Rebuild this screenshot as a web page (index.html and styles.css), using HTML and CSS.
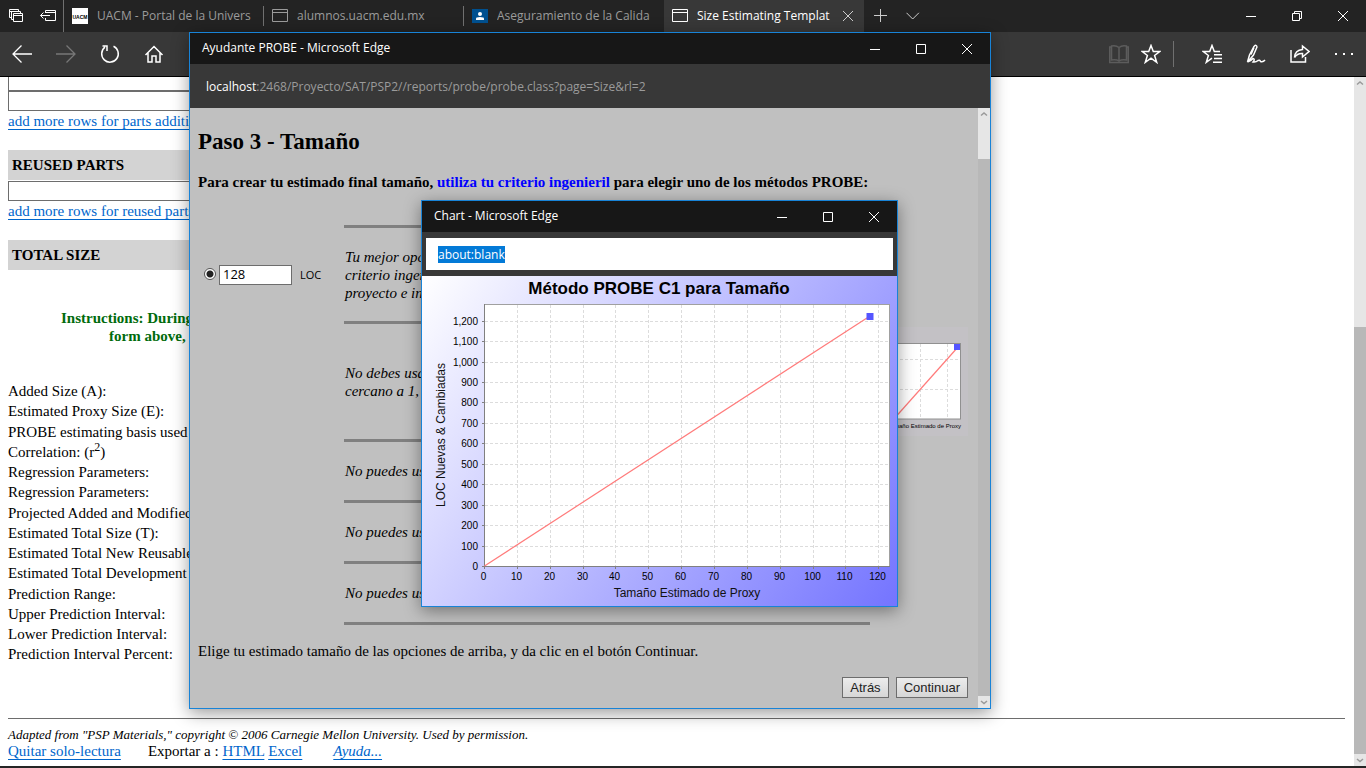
FILE: index.html
```html
<!DOCTYPE html>
<html lang="es">
<head>
<meta charset="utf-8">
<title>Size Estimating Template</title>
<link rel="stylesheet" href="styles.css">
</head>
<body>
<div class="browser">
  <header class="tabbar">
    <div class="tab-tools">
      <button class="icon-btn" aria-label="Pestañas reservadas"><svg width="16" height="16" viewBox="0 0 16 16"><path d="M3.5 9.500H1.500V1.500H10.500V3.500M1.500 3.500H10M5.500 13.500V5.500H14.500V13.500ZM5.500 7.500H14.500M3.500 11.500V3.500H12.500V5.500M3.500 11.500H5.500" /></svg></button>
      <button class="icon-btn" aria-label="Reservar pestañas"><svg width="16" height="16" viewBox="0 0 16 16"><path d="M5.500 5V2.500H15.500V12.500H5.500V10M5.500 4.500H15.500M.5 7.500H10M3.500 4.500L.5 7.500L3.500 10.500"/></svg></button>
    </div>
    <nav class="tabs">
      <a class="tab" href="#uacm"><svg width="16" height="16" viewBox="0 0 16 16"><rect width="16" height="16" class="fill-white"/><text x="8" y="11" class="fav-text">UACM</text></svg><span>UACM - Portal de la Univers</span></a>
      <a class="tab" href="#alumnos"><svg width="16" height="16" viewBox="0 0 16 16"><path d="M.5 1.500H15.500V13.500H.5ZM.5 4.500H15.500"/></svg><span>alumnos.uacm.edu.mx</span></a>
      <a class="tab no-rule" href="#calidad"><svg width="16" height="16" viewBox="0 0 16 16"><rect y="1" width="16" height="14" class="fill-blue"/><circle cx="8" cy="6" r="2" class="fill-white"/><path class="fill-white" d="M4 12V10.500Q4 9 8 9T12 10.500V12Z"/></svg><span>Aseguramiento de la Calida</span></a>
      <div class="tab active"><svg width="16" height="16" viewBox="0 0 16 16"><path d="M.5 1.500H15.500V13.500H.5ZM.5 4.500H15.500"/></svg><span>Size Estimating Templat</span><button class="icon-btn tab-close" aria-label="Cerrar pestaña"><svg width="12" height="12" viewBox="0 0 12 12"><path d="M1 1L11 11M11 1L1 11"/></svg></button></div>
    </nav>
    <button class="icon-btn add" aria-label="Nueva pestaña"><svg width="14" height="14" viewBox="0 0 14 14"><path d="M6.500 0V13M0 6.500H13"/></svg></button>
    <button class="icon-btn more" aria-label="Vistas previas"><svg width="14" height="8" viewBox="0 0 14 8"><path d="M.5 .8L6.700 7L12.900 .8"/></svg></button>
    <div class="caption">
      <button class="cap" aria-label="Minimizar"><svg width="10" height="10" viewBox="0 0 10 10"><path d="M0 5.500H10"/></svg></button>
      <button class="cap" aria-label="Restaurar"><svg width="10" height="10" viewBox="0 0 10 10"><path d="M.5 2.500H7.500V9.500H.5ZM2.500 2.500V.5H9.500V7.500H7.500"/></svg></button>
      <button class="cap" aria-label="Cerrar"><svg width="10" height="10" viewBox="0 0 10 10"><path d="M0 0L10 10M10 0L0 10"/></svg></button>
    </div>
  </header>

  <div class="toolbar">
    <div class="nav-tools">
      <button class="icon-btn" aria-label="Atrás"><svg width="20" height="20" viewBox="0 0 20 20"><path class="mid" d="M.8 10H20M9.500 1.500L1 10L9.500 18.500"/></svg></button>
      <button class="icon-btn dim" aria-label="Adelante"><svg width="20" height="20" viewBox="0 0 20 20"><path class="mid" d="M0 10H19.200M10.500 1.500L19 10L10.500 18.500"/></svg></button>
      <button class="icon-btn" aria-label="Actualizar"><svg width="20" height="20" viewBox="0 0 20 20"><path class="thick" d="M13.500 2.300A8.300 8.300 0 1 1 5 3.200M2.500 2H7V7"/></svg></button>
      <button class="icon-btn" aria-label="Inicio"><svg width="20" height="20" viewBox="0 0 20 20"><path class="thick" d="M1.500 11L10 2.500L18.500 11M4 9V18H8V12H12V18H16V9"/></svg></button>
    </div>
    <div class="page-tools">
      <button class="icon-btn faint" aria-label="Vista de lectura"><svg width="20" height="20" viewBox="0 0 20 20"><path class="thick" d="M10 3.500V16.500M10 3.500Q7 1 2.500 2V16Q7 15 10 17Q13 15 17.500 16V2Q13 1 10 3.500M2.500 3H.7V18.500H19.300V3H17.500"/></svg></button>
      <button class="icon-btn" aria-label="Favoritos"><svg width="20" height="20" viewBox="0 0 20 20"><path class="thick" d="M10 1.500L12.300 7.500H18.800L13.600 11.500L15.700 18.300L10 14.200L4.300 18.300L6.400 11.500L1.200 7.500H7.700Z"/></svg></button>
      <span class="rule"></span>
      <button class="icon-btn" aria-label="Centro"><svg width="20" height="20" viewBox="0 0 20 20"><path class="thick" d="M18 7.500H12.300L10 1.500L7.700 7.500H1.200L6.400 11.500L4.300 18.300L10 14.200M12 10.800H20M12 14.500H20M11 18.300H20"/></svg></button>
      <button class="icon-btn" aria-label="Notas web"><svg width="20" height="20" viewBox="0 0 20 20"><path class="thick" d="M1.500 18L3.500 11L8 2.500Q10.500 0 11 3L7.500 11L2.500 17M8 3.500L5 10.500M1.500 18Q5 17 7 14.500Q9.500 15 7 18Q10 18.500 12 16.500Q14 15.500 14.500 17.500Q17 18.500 19 16"/></svg></button>
      <button class="icon-btn" aria-label="Compartir"><svg width="20" height="20" viewBox="0 0 20 20"><path class="thick" d="M1 6V18H15.500V13M4.500 13.500Q5 6 12.500 5.500V2L19 7.500L12.500 13V9.500Q7.500 9 4.500 13.500"/></svg></button>
      <button class="icon-btn" aria-label="Más"><svg width="20" height="20" viewBox="0 0 20 20"><path class="fill-white" d="M1 9h2v2H1zM9 9h2v2H9zM17 9h2v2H17z"/></svg></button>
    </div>
  </div>

  <div class="viewport">
    <main class="sheet">
      <input class="row-input first" aria-label="Parte agregada 1">
      <input class="row-input" aria-label="Parte agregada 2">
      <a class="link add-rows" href="#parts">add more rows for parts additions</a>
      <h3 class="band">REUSED PARTS</h3>
      <input class="row-input" aria-label="Parte reutilizada">
      <a class="link add-rows" href="#reused">add more rows for reused parts</a>
      <h3 class="band">TOTAL SIZE</h3>
      <p class="notice"><span>Instructions: During</span><span class="indent">form above,</span></p>
      <ul class="fields">
        <li>Added Size (A):</li>
        <li>Estimated Proxy Size (E):</li>
        <li class="tall">PROBE estimating basis used</li>
        <li>Correlation: (r<sup>2</sup>)</li>
        <li>Regression Parameters:</li>
        <li>Regression Parameters:</li>
        <li class="tall">Projected Added and Modified</li>
        <li>Estimated Total Size (T):</li>
        <li>Estimated Total New Reusable</li>
        <li>Estimated Total Development</li>
        <li class="tall">Prediction Range:</li>
        <li>Upper Prediction Interval:</li>
        <li>Lower Prediction Interval:</li>
        <li>Prediction Interval Percent:</li>
      </ul>
      <footer class="foot">
        <p class="credit">Adapted from "PSP Materials," copyright © 2006 Carnegie Mellon University. Used by permission.</p>
        <div class="foot-links">
          <a class="link" href="#quitar">Quitar solo-lectura</a>
          <span>Exportar a : <a class="link" href="#html">HTML</a> <a class="link" href="#excel">Excel</a></span>
          <a class="link help" href="#ayuda">Ayuda...</a>
        </div>
      </footer>
    </main>
    <div class="scroll main-scroll">
      <svg width="12" height="12" viewBox="0 0 12 12"><path d="M3 7.500L6 5L9 7.500"/></svg>
      <span class="thumb"></span>
      <svg width="12" height="12" viewBox="0 0 12 12"><path d="M3 5L6 7.500L9 5"/></svg>
    </div>
  </div>
  <div class="taskbar"></div>
</div>

<section class="window probe">
  <header class="titlebar"><h1>Ayudante PROBE - Microsoft Edge</h1>
    <div class="caption">
      <button class="cap" aria-label="Minimizar"><svg width="10" height="10" viewBox="0 0 10 10"><path d="M0 5.500H10"/></svg></button>
      <button class="cap" aria-label="Maximizar"><svg width="10" height="10" viewBox="0 0 10 10"><path d="M.5 .5H9.500V9.500H.5Z"/></svg></button>
      <button class="cap" aria-label="Cerrar"><svg width="10" height="10" viewBox="0 0 10 10"><path d="M0 0L10 10M10 0L0 10"/></svg></button>
    </div>
  </header>
  <div class="address"><b>localhost</b>:2468/Proyecto/SAT/PSP2//reports/probe/probe.class?page=Size&amp;rl=2</div>
  <div class="probe-view">
    <form class="probe-page">
      <h2>Paso 3 - Tamaño</h2>
      <p class="lead">Para crear tu estimado final tamaño, <a href="#criterio">utiliza tu criterio ingenieril</a> para elegir uno de los métodos PROBE:</p>
      <div class="methods">
        <hr>
        <div class="method m-lg">
          <div class="choice"><input type="radio" name="metodo" id="metodo" checked aria-label="Método C1"><input class="loc" id="loc" value="128"><label for="loc">LOC</label></div>
          <p>Tu mejor opción<br>criterio ingenie<br>proyecto e info</p>
        </div>
        <hr>
        <div class="method m-xl">
          <p>No debes usar<br>cercano a 1,</p>
          <svg class="mini" width="98" height="109" viewBox="0 0 98 109">
            <rect width="98" height="109" fill="#c3c1c5"/>
            <rect x="0" y="16.500" width="90.500" height="75.500" fill="#fff" stroke="#909090"/>
            <path class="grid" d="M0 32.500H90M0 62.500H90M50.500 17V92M77.500 17V92"/>
            <path class="curve" d="M14 103L88 20"/>
            <rect x="84" y="17" width="6" height="6" fill="#5555ff"/>
            <text x="91" y="101" class="mini-text">Tamaño Estimado de Proxy</text>
          </svg>
        </div>
        <hr>
        <div class="method"><p>No puedes usar</p></div>
        <hr>
        <div class="method"><p>No puedes usar</p></div>
        <hr>
        <div class="method"><p>No puedes usar</p></div>
        <hr>
      </div>
      <p class="choose">Elige tu estimado tamaño de las opciones de arriba, y da clic en el botón Continuar.</p>
      <div class="actions"><button type="button" class="btn">Atrás</button><button type="button" class="btn">Continuar</button></div>
    </form>
    <div class="scroll probe-scroll">
      <svg width="12" height="12" viewBox="0 0 12 12"><path d="M3 7.500L6 5L9 7.500"/></svg>
      <span class="thumb"></span>
      <svg width="12" height="12" viewBox="0 0 12 12"><path d="M3 5L6 7.500L9 5"/></svg>
    </div>
  </div>
</section>

<section class="window chart">
  <header class="titlebar"><h1>Chart - Microsoft Edge</h1>
    <div class="caption">
      <button class="cap" aria-label="Minimizar"><svg width="10" height="10" viewBox="0 0 10 10"><path d="M0 5.500H10"/></svg></button>
      <button class="cap" aria-label="Maximizar"><svg width="10" height="10" viewBox="0 0 10 10"><path d="M.5 .5H9.500V9.500H.5Z"/></svg></button>
      <button class="cap" aria-label="Cerrar"><svg width="10" height="10" viewBox="0 0 10 10"><path d="M0 0L10 10M10 0L0 10"/></svg></button>
    </div>
  </header>
  <div class="url-wrap"><input class="url" id="url" value="about:blank" aria-label="Dirección"></div>
  <svg class="plot" viewBox="0 0 475 330" role="img" aria-label="Método PROBE C1 para Tamaño">
    <defs><linearGradient id="bg" gradientUnits="userSpaceOnUse" x1="0" y1="0" x2="475" y2="330"><stop offset="0" stop-color="#fff"/><stop offset="1" stop-color="#7474ff"/></linearGradient></defs>
    <rect width="475" height="330" fill="url(#bg)"/>
    <text x="237" y="18" class="plot-title">Método PROBE C1 para Tamaño</text>
    <rect x="62.500" y="28.500" width="405" height="262" fill="#fff" stroke="#a0a0a0"/>
    <g id="axes"></g>
    <path d="M62.500 28V290.500H468" class="axis"/>
    <path class="curve" d="M62.500 290L448 40"/>
    <rect x="444.500" y="37" width="7" height="7" fill="#5555ff"/>
    <text x="265" y="321" class="axis-title">Tamaño Estimado de Proxy</text>
    <text transform="translate(23 159) rotate(-90)" class="axis-title">LOC Nuevas &amp; Cambiadas</text>
  </svg>
</section>
<script src="script.js"></script>
</body>
</html>
```
FILE: styles.css
```css
* { box-sizing: border-box; }
body {
  margin: 0;
  overflow: hidden;
  font: 15px/18px "Liberation Serif", serif;
  color: #000;
  background: #fff;
}
h1, h2, h3, p, ul { margin: 0; padding: 0; }
button { font: inherit; }
svg { display: block; flex: none; }

.browser { display: flex; flex-direction: column; height: 100vh; }
.tabbar, .toolbar, .titlebar, .address, .url {
  font-family: "Open Sans", "Noto Sans", sans-serif;
  font-size: 12px;
}
.tabbar { display: flex; height: 32px; flex: none; background: #232323; }
.icon-btn, .cap { display: flex; align-items: center; justify-content: center; padding: 0; border: 0; background: none; color: #fff; }
.icon-btn path, .cap path, .tab path { fill: none; stroke: currentColor; }
path.mid { stroke-width: 1.3; }
path.thick { stroke-width: 1.5; }
svg .fill-white, .icon-btn path.fill-white, .tab path.fill-white { fill: #fff; stroke: none; }
.fill-blue { fill: #00508f; }
.fav-text { font: bold 5px "Liberation Sans", sans-serif; text-anchor: middle; fill: #000; }
.tab-tools { display: flex; gap: 16px; padding-left: 8px; width: 64px; border-right: 1px solid #707070; }
.tabs { display: flex; }
.tab { position: relative; display: flex; align-items: center; gap: 9px; width: 200px; padding-left: 8px; color: #9b9b9b; text-decoration: none; white-space: nowrap; }
.tab span { width: 158px; overflow: hidden; }
.tab:not(.active):not(.no-rule)::after { content: ""; position: absolute; right: 0; top: 6px; bottom: 6px; width: 1px; background: #707070; }
.tab.active { background: #383838; color: #fff; }
.tab.active span { width: 136px; }
.tab-close { color: #ccc; }
.add { width: 34px; color: #ccc; }
.more { width: 30px; color: #ccc; }
.caption { display: flex; margin-left: auto; }
.cap { width: 46px; height: 31px; }

.toolbar { display: flex; justify-content: space-between; height: 45px; flex: none; background: #383838; border-bottom: 1px solid #000; }
.nav-tools { display: flex; gap: 24px; padding-left: 12px; }
.page-tools { display: flex; align-items: center; gap: 24px; padding-right: 12px; }
.page-tools .icon-btn:first-child { margin-right: -12px; }
.rule { width: 1px; height: 26px; margin: 0 4px 0 -12px; background: #707070; }
.dim { color: #777; }
.faint { color: #5c5c5c; }

.viewport { display: flex; flex: 1; min-height: 0; overflow: hidden; }
.sheet { flex: 1; display: flex; flex-direction: column; align-items: stretch; padding: 0 9px 0 8px; }
.row-input { width: 60%; height: 20px; flex: none; border: 1px solid #6d6d6d; background: #fff; }
.row-input.first { height: 14px; border-top: 0; }
.link { color: #0066cc; text-underline-offset: 3px; }
.add-rows { margin: 1px 0 20px; height: 18px; align-self: flex-start; }
.band { width: 60%; height: 30px; flex: none; margin-bottom: 1px; padding: 0 4px; font-size: 15px; line-height: 31px; background: #d3d3d3; }
.notice { margin: 38px 0 36px; padding-left: 53px; font-weight: bold; color: #006b0c; }
.notice span { display: block; }
.notice .indent { padding-left: 48px; }
.fields { list-style: none; }
.fields li { height: 20px; line-height: 20px; }
.fields .tall { height: 21px; line-height: 22px; }
.fields sup { font-size: 12px; line-height: 0; }
.foot { margin-top: auto; padding: 8px 0 6px; border-top: 1px solid #6d6d6d; }
.credit { font-size: 13px; line-height: 15px; font-style: italic; }
.foot-links { display: flex; gap: 27px; }
.help { font-style: italic; margin-left: 4px; }
.taskbar { height: 2px; flex: none; background: #252525; }

.scroll { display: flex; flex-direction: column; width: 12px; flex: none; background: #e6e6e6; }
.scroll path { fill: none; stroke: #9a9a9a; stroke-width: 1.5; }
.thumb { flex: 1; background: #b8b8b8; }
.main-scroll .thumb { margin-top: 238px; }
.probe-scroll .thumb { margin-top: 39px; }

.window { position: absolute; display: flex; flex-direction: column; border: 1px solid #1883d7; background: #383838; box-shadow: 0 4px 16px rgba(0, 0, 0, .4); }
.titlebar { display: flex; height: 31px; flex: none; padding-left: 12px; background: #171717; color: #fff; }
.titlebar h1 { font-size: 12px; font-weight: normal; line-height: 30px; white-space: nowrap; }
.address { height: 44px; flex: none; padding-left: 16px; line-height: 46px; color: #9b9b9b; white-space: nowrap; }
.address b { font-weight: normal; color: #fff; }

.probe { left: 189px; right: 375px; top: 32px; bottom: 59px; }
.probe-view { display: flex; flex: 1; min-height: 0; overflow: hidden; background: #c0c0c0; }
.probe-page { flex: 1; padding: 20px 10px 10px 8px; display: flex; flex-direction: column; }
.probe-page h2 { font-size: 23px; line-height: 28px; margin-bottom: 17px; }
.lead { font-weight: bold; }
.lead a { color: #0000ff; text-decoration: none; }
.methods { margin-top: 34px; }
.methods hr { height: 3px; width: 526px; margin: 0 0 0 146px; border: 0; background: #808080; }
.method { display: grid; grid-template-columns: 146px 526px 98px; align-items: center; min-height: 58px; }
.m-lg { min-height: 93px; }
.m-xl { min-height: 115px; }
.method p { grid-column: 2; font-style: italic; white-space: nowrap; padding-left: 1px; }
.choice { display: flex; align-items: center; padding-left: 6px; }
.choice input[type="radio"] { appearance: none; width: 12px; height: 12px; margin: 0 3px 2px 0; border: 1px solid #555; border-radius: 50%; background: radial-gradient(circle, #222 0 3px, #fff 4px); }
.loc { width: 73px; height: 20px; padding: 0 3px 2px; border: 1px solid #6d6d6d; background: #fff; font: 13px "Open Sans", sans-serif; }
.choice label { margin-left: 8px; font: 11px "Open Sans", sans-serif; }
.choose { margin-top: 17px; }
.actions { display: flex; justify-content: flex-end; gap: 7px; margin-top: auto; }
.btn { height: 21px; padding: 0 7px; border: 1px solid #6d6d6d; background: linear-gradient(#ececec, #d6d6d6); color: #222; font: 13px "Liberation Sans", sans-serif; }

.chart { left: 421px; right: 468px; top: 200px; }
.url-wrap { padding: 6px 4px; background: #383838; }
.url { display: block; width: 100%; height: 32px; padding: 0 12px; border: 0; outline: 0; background: #fff; color: #000; line-height: 18px; }
.url::selection { background: rgba(0, 120, 215, .99); color: #fff; }
.plot { width: 100%; height: auto; font-family: "Liberation Sans", sans-serif; }
.plot-title { font-size: 17px; font-weight: bold; text-anchor: middle; }
.axis-title { font-size: 12px; text-anchor: middle; fill: #111; }
.tick { font-size: 10px; }
.tick-x { text-anchor: middle; }
.tick-y { text-anchor: end; }
.axis { fill: none; stroke: #808080; }
.grid { fill: none; stroke: #dcdcdc; stroke-dasharray: 3 2; }
.curve { fill: none; stroke: #ff7b7b; stroke-width: 1.2; }
.mini-text { font: 6px "Liberation Sans", sans-serif; text-anchor: end; }
```
FILE: script.js
```js
const axes = document.getElementById('axes');
const add = (tag, cls, attrs, text) => {
  const el = document.createElementNS('http://www.w3.org/2000/svg', tag);
  el.setAttribute('class', cls);
  Object.entries(attrs).forEach(([k, v]) => el.setAttribute(k, v));
  if (text !== undefined) el.textContent = text;
  axes.appendChild(el);
};
for (let i = 0; i <= 12; i++) {
  const x = Math.round(62 + i * 32.85) + 0.5;
  const y = Math.round(290 - i * 20.45) + 0.5;
  if (i) {
    add('path', 'grid', { d: `M${x} 29V290` });
    add('path', 'grid', { d: `M63 ${y}H467` });
  }
  add('path', 'axis', { d: `M${x} 290V293M60 ${y}H62` });
  add('text', 'tick tick-x', { x: x - 1, y: 304 }, i * 10);
  add('text', 'tick tick-y', { x: 56, y: y + 3 }, (i * 100).toLocaleString('en-US'));
}
const url = document.getElementById('url');
url.focus();
url.select();
```
